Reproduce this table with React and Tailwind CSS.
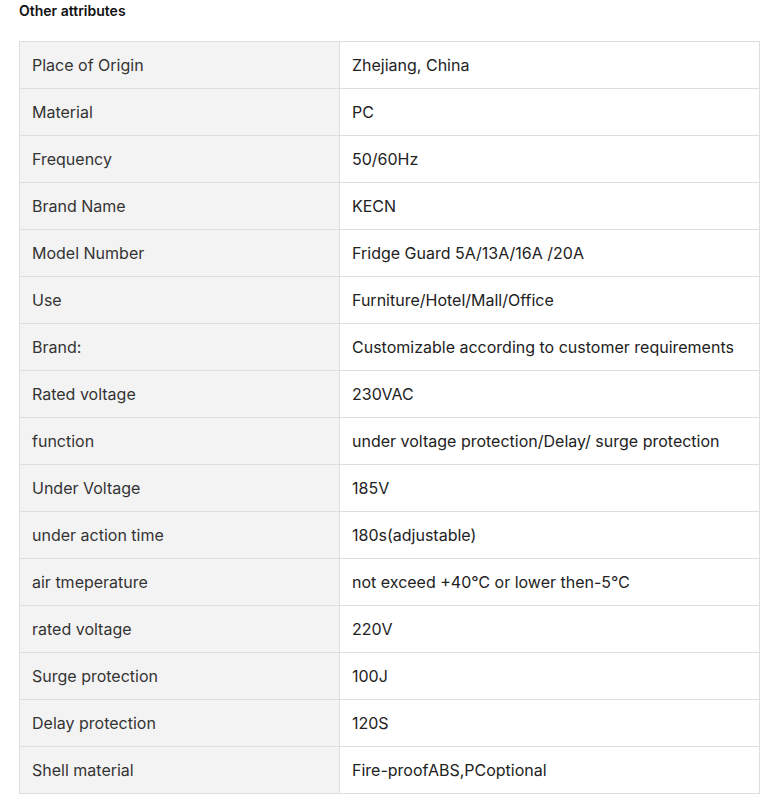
const rows = [
  ['Place of Origin', 'Zhejiang, China'],
  ['Material', 'PC'],
  ['Frequency', '50/60Hz'],
  ['Brand Name', 'KECN'],
  ['Model Number', 'Fridge Guard 5A/13A/16A /20A'],
  ['Use', 'Furniture/Hotel/Mall/Office'],
  ['Brand:', 'Customizable according to customer requirements'],
  ['Rated voltage', '230VAC'],
  ['function', 'under voltage protection/Delay/ surge protection'],
  ['Under Voltage', '185V'],
  ['under action time', '180s(adjustable)'],
  ['air tmeperature', 'not exceed +40℃ or lower then-5℃'],
  ['rated voltage', '220V'],
  ['Surge protection', '100J'],
  ['Delay protection', '120S'],
  ['Shell material', 'Fire-proofABS,PCoptional'],
];

export default function App() {
  return (
    <div className="w-[778px] h-[807px] bg-white pl-[19px] pr-[18px] font-['Inter','Liberation_Sans',sans-serif] text-[#222]">
      <h2 className="pt-[2px] h-[41px] text-[14px] leading-[18px] font-semibold text-[#111]">Other attributes</h2>
      <table className="w-[741px] border-collapse table-fixed">
        <tbody>
          {rows.map(([k, v]) => (
            <tr key={k} className="h-[47px]">
              <td className="w-[320px] border border-[#dedede] bg-[#f3f3f3] px-[12px] text-[16px] leading-[20px] text-[#333]">{k}</td>
              <td className="border border-[#dedede] px-[12px] text-[16px] leading-[20px] text-[#222]">{v}</td>
            </tr>
          ))}
        </tbody>
      </table>
    </div>
  );
}
